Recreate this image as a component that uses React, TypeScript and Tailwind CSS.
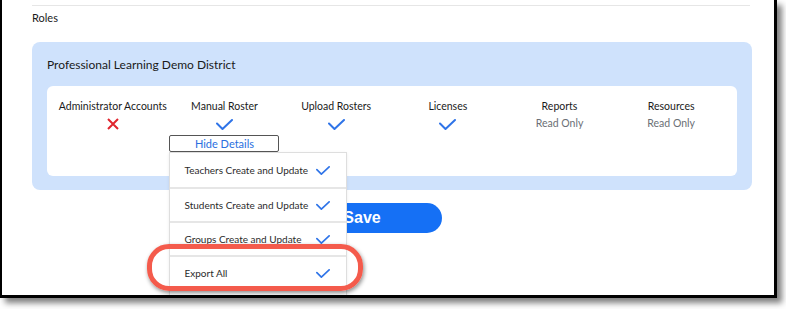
import React from 'react';

const font = { fontFamily: 'Lato, "Liberation Sans", sans-serif' };

function Check({ w = 17, h = 11 }: { w?: number; h?: number }) {
  return (
    <svg width={w} height={h} viewBox="0 0 17 11" fill="none" className="block">
      <path d="M1 4.5 L6.5 10 L16 1" stroke="#2f74e8" strokeWidth="2" strokeLinecap="round" strokeLinejoin="round" />
    </svg>
  );
}

function Cross() {
  return (
    <svg width="12" height="12" viewBox="0 0 12 12" fill="none" className="block">
      <path d="M1 1 L11 11 M11 1 L1 11" stroke="#e0262e" strokeWidth="2" />
    </svg>
  );
}

const details = ['Teachers Create and Update', 'Students Create and Update', 'Groups Create and Update', 'Export All'];

function Column({ title, children }: { title: string; children: React.ReactNode }) {
  return (
    <div className="flex flex-col items-center">
      <div className="text-[10.5px] leading-[14px] text-[#1a1a1a] whitespace-nowrap">{title}</div>
      {children}
    </div>
  );
}

function ReadOnly() {
  return <div className="mt-[3px] h-[14px] text-[10.5px] leading-[14px] text-[#6b6f75]">Read Only</div>;
}

function IconCell({ children }: { children: React.ReactNode }) {
  return <div className="mt-[4px] h-[14px] flex items-center justify-center">{children}</div>;
}

export default function App() {
  return (
    <div className="w-[786px] h-[309px] bg-white relative overflow-hidden" style={font}>
      <div className="w-[777px] h-[298px] bg-white border-l-2 border-r-[3px] border-b-[3px] border-black shadow-[5px_5px_6px_rgba(0,0,0,0.5)] relative overflow-hidden">
        <div className="mt-[5px] ml-[30px] w-[718px] h-px bg-[#e6e6e6]" />
        <div className="ml-[30px] mt-[5px] text-[11px] leading-[14px] text-[#1a1a1a]">Roles</div>

        {/* District panel */}
        <div className="mt-[17px] ml-[30px] w-[720px] h-[148px] rounded-[8px] bg-[#cfe2fc] px-[15px] pt-[15px]">
          <div className="text-[12px] leading-[16px] text-[#1a1a1a]">Professional Learning Demo District</div>
          <div className="mt-[13px] w-[690px] h-[90px] bg-white rounded-[6px] px-[10px] pt-[13px] grid grid-cols-6">
            <Column title="Administrator Accounts">
              <IconCell>
                <Cross />
              </IconCell>
            </Column>
            <Column title="Manual Roster">
              <IconCell>
                <Check />
              </IconCell>
              <div className="relative mt-[4px] z-10">
                <button className="block w-[110px] h-[17px] border border-[#555] rounded-[2px] bg-white text-[11px] leading-[15px] text-[#2a6fe0]">
                  Hide Details
                </button>
                <div className="absolute top-full left-0 w-[178px] h-[150px] bg-white border border-[#dedede] shadow-[0_1px_3px_rgba(0,0,0,0.08)]">
                  {details.map((d, i) => (
                    <div
                      key={d}
                      className={`h-[34px] flex items-center justify-between pl-[14px] pr-[16px] ${i > 0 ? 'border-t-2 border-[#e6e6e6]' : ''}`}
                    >
                      <span className="text-[10px] text-[#2b2b2b] whitespace-nowrap">{d}</span>
                      <Check w={14} h={9} />
                    </div>
                  ))}
                </div>
              </div>
            </Column>
            <Column title="Upload Rosters">
              <IconCell>
                <Check />
              </IconCell>
            </Column>
            <Column title="Licenses">
              <IconCell>
                <Check />
              </IconCell>
            </Column>
            <Column title="Reports">
              <ReadOnly />
            </Column>
            <Column title="Resources">
              <ReadOnly />
            </Column>
          </div>
        </div>

        <button
          className="mt-[13px] ml-[280px] w-[160px] h-[30px] rounded-full bg-[#1570f5] text-white font-bold text-[16px] leading-[30px] block"
          style={{ fontFamily: '"Liberation Sans", sans-serif' }}
        >
          Save
        </button>

        {/* annotation */}
        <div className="absolute left-[145px] top-[244px] w-[216px] h-[47px] border-[5px] border-[#f45b4c] rounded-[22px] shadow-[1px_2px_4px_rgba(0,0,0,0.45)] z-20" />
      </div>
    </div>
  );
}
